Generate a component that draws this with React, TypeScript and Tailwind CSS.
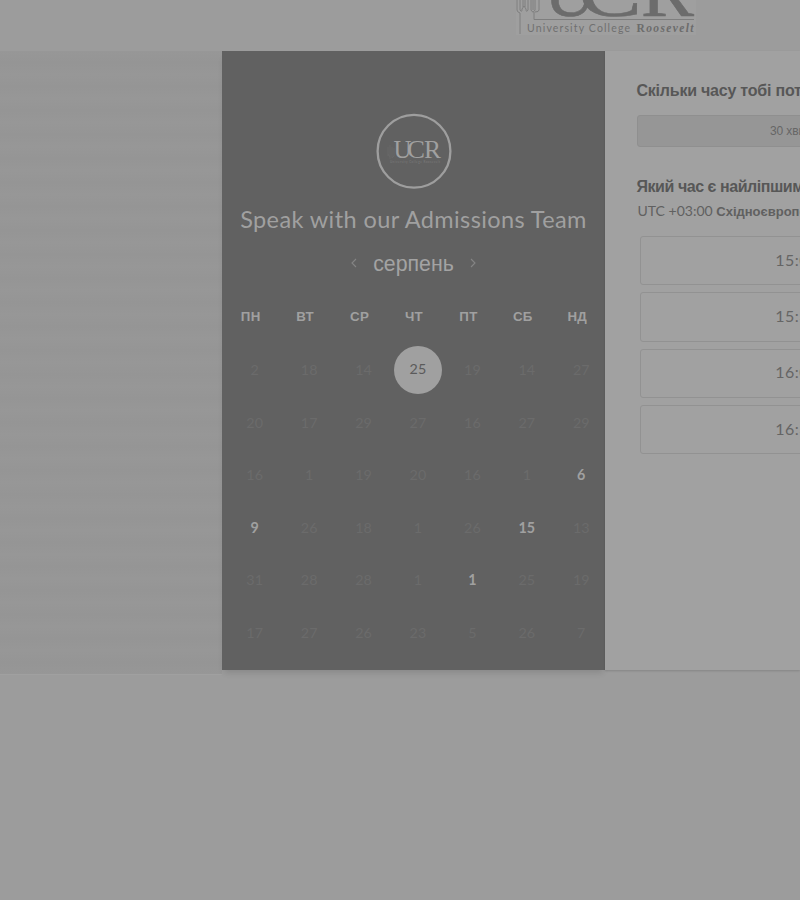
const WEEKDAYS = ['ПН', 'ВТ', 'СР', 'ЧТ', 'ПТ', 'СБ', 'НД'];

const DAYS = [
  ['2', '18', '14', '25', '19', '14', '27'],
  ['20', '17', '29', '27', '16', '27', '29'],
  ['16', '1', '19', '20', '16', '1', '6'],
  ['9', '26', '18', '1', '26', '15', '13'],
  ['31', '28', '28', '1', '1', '25', '19'],
  ['17', '27', '26', '23', '5', '26', '7'],
];

const AVAILABLE = new Set(['2-6', '3-0', '3-5', '4-4']);
const SELECTED = '0-3';
const SLOTS = ['15:00', '15:30', '16:00', '16:30'];

function HeaderLogo() {
  return (
    <svg className="ml-[514px] block h-[38px] w-[184px]" viewBox="0 0 184 38">
      <rect x="2" width="180" height="35" fill="#9f9f9f" />
      <g fill="none" stroke="#7e7e7e" strokeWidth="1">
        <path d="M3 0V10Q3 12 6 13V34" />
        <path d="M6 0V10Q8 13 8 9L10 6L12 9Q12 13 14 10V0M9 0V7M11 0V7M17 0V10Q19 14 21 10V0M19 0V10M25 0V10Q25 12 21 12" />
        <path d="M20 12V19.500H180" />
      </g>
      <g fill="#6c6c6c" stroke="#6c6c6c" strokeWidth="0.600" fontFamily="'Liberation Serif', serif">
        <text x="30" y="15.500" fontSize="72" textLength="52" lengthAdjust="spacingAndGlyphs">U</text>
        <text x="64" y="15.500" fontSize="72" textLength="64" lengthAdjust="spacingAndGlyphs">C</text>
        <text x="127" y="16" fontSize="72" textLength="53" lengthAdjust="spacingAndGlyphs">R</text>
      </g>
      <text x="13" y="32" fontSize="10.500" fill="#707070" fontFamily="Lato, sans-serif" textLength="103">
        University College
      </text>
      <text x="122.500" y="32" fontSize="11.500" fill="#6c6c6c" fontFamily="'Liberation Serif', serif" textLength="57">
        <tspan fontWeight="bold">R</tspan>
        <tspan fontStyle="italic" fontWeight="bold">oosevelt</tspan>
      </text>
    </svg>
  );
}

function Avatar() {
  return (
    <svg className="block h-[76px] w-[76px]" viewBox="0 0 76 76">
      <circle cx="38" cy="38.300" r="36.400" fill="none" stroke="#9e9e9e" strokeWidth="2.300" />
      <path d="M12 34V43M14 32V46M12 41L14 44M16 34V45L18 43V35" fill="none" stroke="#6a6a6a" strokeWidth="0.800" />
      <g fill="#a0a0a0" fontFamily="'Liberation Serif', serif" fontSize="26">
        <text x="17.500" y="44.500" textLength="18" lengthAdjust="spacingAndGlyphs">U</text>
        <text x="31" y="44.500" textLength="18" lengthAdjust="spacingAndGlyphs">C</text>
        <text x="48" y="44.500" textLength="17" lengthAdjust="spacingAndGlyphs">R</text>
      </g>
      <text x="14" y="49.500" fontSize="3" fill="#7c7c7c" fontFamily="Lato, sans-serif" textLength="50">
        University College Roosevelt
      </text>
    </svg>
  );
}

function Chevron({ flip = false }: { flip?: boolean }) {
  return (
    <svg className="h-[10px] w-[6px]" viewBox="0 0 6 10" fill="none" stroke="#858585" strokeWidth="1.100">
      <path d={flip ? 'M1 1L5 5L1 9' : 'M5 1L1 5L5 9'} />
    </svg>
  );
}

function Day({ id, value }: { id: string; value: string }) {
  if (id === SELECTED) {
    return (
      <div className="flex items-center justify-center">
        <span className="flex size-[48.500px] shrink-0 items-center justify-center rounded-full bg-[#a0a0a0] pb-[2px] text-[#5b5b5b]">
          {value}
        </span>
      </div>
    );
  }
  return (
    <div
      className={
        AVAILABLE.has(id)
          ? 'flex items-center justify-center font-bold text-[#a0a0a0]'
          : 'flex items-center justify-center text-[#6b6b6b]'
      }
    >
      {value}
    </div>
  );
}

export default function App() {
  return (
    <div className="h-[900px] w-[800px] overflow-hidden bg-[#9c9c9c] font-['Lato','Liberation_Sans',sans-serif]">
      <header className="h-[50.500px] bg-[#9c9c9c]">
        <HeaderLogo />
      </header>

      <main className="flex h-[619.500px]">
        <div className="h-[624px] w-[222px] shrink-0 border-b border-[#a0a0a0] bg-[repeating-linear-gradient(to_bottom,#979797_0px,#959595_12px,#979797_24px)]" />

        <section className="flex w-[383px] shrink-0 flex-col bg-[#616161] shadow-[0_5px_6px_-2px_rgba(0,0,0,0.12)]">
          <div className="flex justify-center pt-[62.500px]">
            <Avatar />
          </div>
          <h1 className="mt-[14px] h-8 whitespace-nowrap text-center text-[23.500px] leading-8 tracking-[0.400px] text-[#a0a0a0]">
            Speak with our Admissions Team
          </h1>
          <div className="mt-[12px] flex h-8 items-center justify-center gap-4 font-['Liberation_Sans',sans-serif] text-[21.300px] text-[#a3a3a3]">
            <Chevron />
            <span className="pt-px leading-8">серпень</span>
            <Chevron flip />
          </div>
          <div className="mt-[28px] ml-[1.500px] grid h-5 w-[381px] grid-cols-7 text-center font-['Liberation_Sans',sans-serif] text-[13.300px] leading-5 font-bold tracking-[0.300px] text-[#a0a0a0]">
            {WEEKDAYS.map((day) => (
              <div key={day}>{day}</div>
            ))}
          </div>
          <div className="mt-[16.500px] ml-[5.500px] grid h-[315px] w-[381px] shrink-0 grid-cols-7 grid-rows-6 text-[14.300px] tracking-[0.100px]">
            {DAYS.map((week, r) =>
              week.map((value, c) => <Day key={`${r}-${c}`} id={`${r}-${c}`} value={value} />),
            )}
          </div>
        </section>

        <section className="w-[195px] shrink-0 overflow-hidden bg-[#a1a1a1] pl-[31.500px] shadow-[0_1px_2px_rgba(0,0,0,0.150)]">
          <div className="w-[330px] font-['Liberation_Sans',sans-serif] text-[#575757]">
            <h2 className="mt-[30.500px] h-5 whitespace-nowrap text-base leading-5 font-bold tracking-[-0.220px]">
              Скільки часу тобі потрібно?
            </h2>
            <div className="mt-[14px] flex h-8 w-[322px] items-center justify-center rounded-[3px] border border-[#8f8f8f] bg-[#969696] text-xs tracking-[-0.100px] text-[#666666]">
              30 хвилин
            </div>
            <h2 className="mt-[28px] h-6 whitespace-nowrap text-base leading-6 font-bold tracking-[-0.450px]">
              Який час є найліпшим?
            </h2>
            <p className="mt-[2px] h-5 whitespace-nowrap pl-px text-[13px] leading-5 font-bold text-[#606060]">
              <span className="font-['Lato',sans-serif] text-[14px] font-normal">UTC +03:00</span>{' '}
              Східноєвропейський час
            </p>
          </div>
          <div className="mt-[15px] ml-[3.500px] flex w-[314px] flex-col gap-[7px]">
            {SLOTS.map((slot) => (
              <div
                key={slot}
                className="flex h-[49.300px] items-center justify-center rounded-[3px] border border-[#929292] pb-[2px] text-base tracking-[0.500px] text-[#656565]"
              >
                {slot}
              </div>
            ))}
          </div>
        </section>
      </main>
    </div>
  );
}
